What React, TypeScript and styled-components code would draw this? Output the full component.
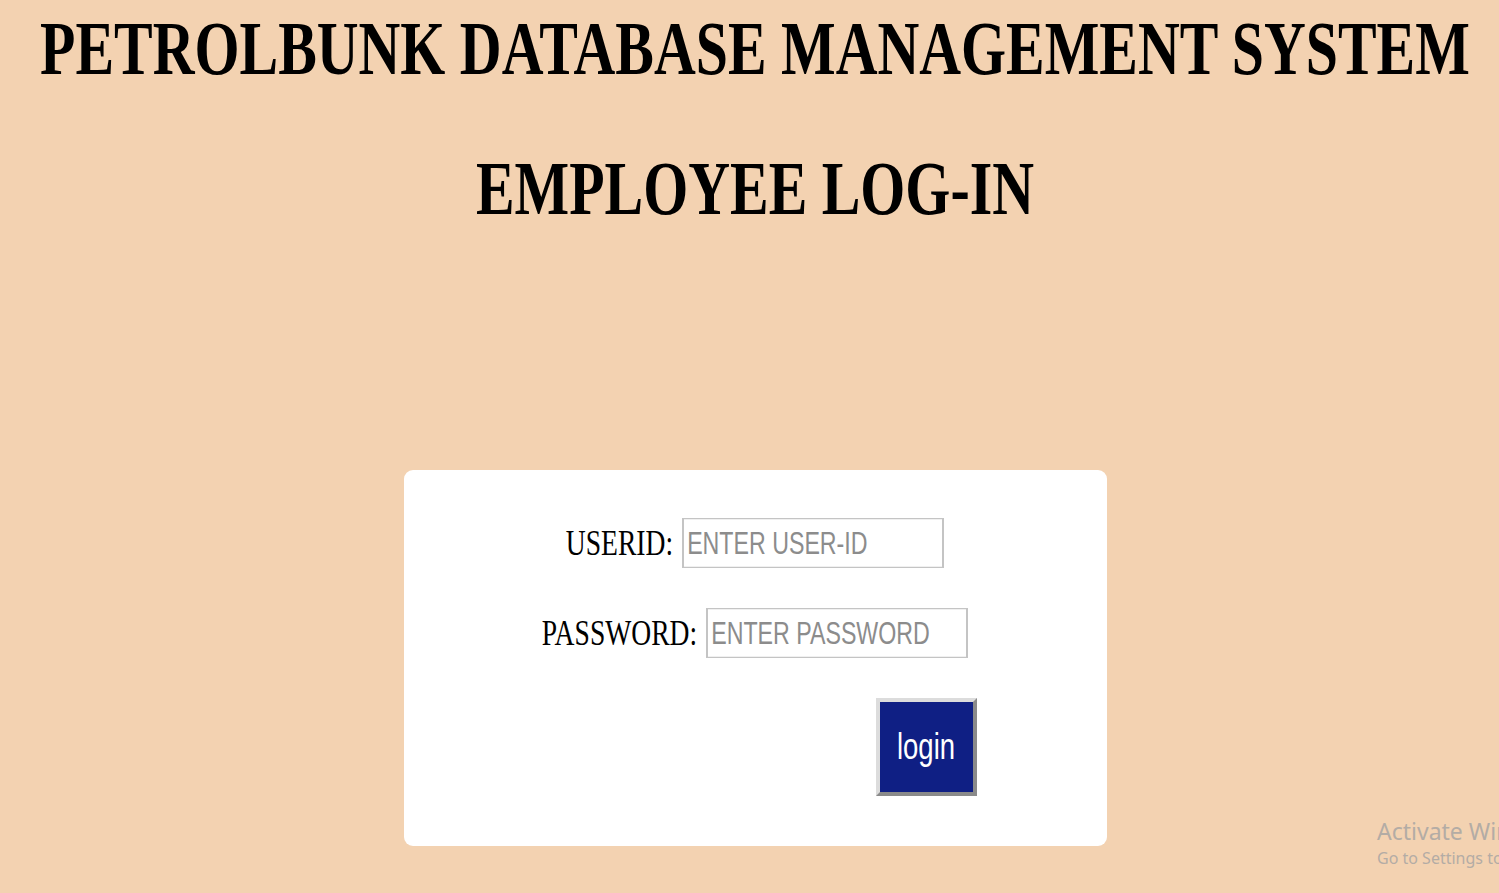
import React from "react";
import styled, { createGlobalStyle } from "styled-components";

const GlobalStyle = createGlobalStyle`
  html, body {
    margin: 0;
    padding: 0;
    background: #f3d2b1;
    overflow: hidden;
  }
  body {
    font-family: "Liberation Serif", "Times New Roman", serif;
    width: 1499px;
    height: 893px;
  }
`;

const Page = styled.div`
  position: relative;
  width: 1499px;
  height: 893px;
  box-sizing: border-box;
  padding: 20px 0 0 11px;
  display: flex;
  flex-direction: column;
  align-items: center;
`;

const Heading = styled.h1<{ $gap?: number }>`
  margin: ${(p) => p.$gap ?? 0}px 0 0;
  font-family: "Liberation Serif", "Times New Roman", serif;
  font-weight: 700;
  font-size: 57.9px;
  line-height: 57.5px;
  color: #000;
  white-space: nowrap;
  transform: scaleY(1.31);
`;

const Card = styled.form`
  margin-top: 253px;
  width: 703px;
  box-sizing: border-box;
  background: #fff;
  border-radius: 9px;
  padding: 54px 0 50px;
  display: flex;
  flex-direction: column;
`;

const Row = styled.div<{ $gap?: number }>`
  display: flex;
  justify-content: center;
  align-items: center;
  gap: 9px;
  height: 38px;
  margin-top: ${(p) => p.$gap ?? 0}px;
`;

const Label = styled.label`
  font-family: "Liberation Serif", "Times New Roman", serif;
  font-size: 27.6px;
  line-height: 36px;
  color: #000;
  white-space: nowrap;
  transform: scaleY(1.3);
`;

const Input = styled.input`
  width: 262px;
  height: 38px;
  box-sizing: border-box;
  border: 2px solid #c4c4c4;
  border-top-width: 1.6px;
  border-bottom-width: 1.6px;
  padding: 0 3px;
  margin: 0;
  background: #fff;
  font-family: "Liberation Sans", Arial, sans-serif;
  font-size: 23.2px;
  color: #333;
  outline: none;
  transform: scaleY(1.32);
  &::placeholder {
    color: #8c8c8c;
  }
`;

const ButtonRow = styled.div`
  display: flex;
  margin-top: 46px;
  padding-left: 472px;
`;

const LoginButton = styled.button`
  width: 101px;
  height: 98px;
  box-sizing: border-box;
  margin: 0;
  padding: 0;
  background: #0f1f84;
  border-style: solid;
  border-width: 4px;
  border-color: #dcdcdc #8a8a8a #8a8a8a #dcdcdc;
  display: flex;
  align-items: center;
  justify-content: center;
  cursor: pointer;
`;

const ButtonText = styled.span`
  display: inline-block;
  font-family: "Liberation Sans", Arial, sans-serif;
  font-size: 27.5px;
  line-height: 30px;
  color: #fff;
  transform: scaleY(1.34);
`;

const Watermark = styled.div`
  position: absolute;
  left: 1377px;
  top: 815px;
  color: #b3aca5;
  font-family: "Noto Sans", "Open Sans", sans-serif;
  white-space: nowrap;
  pointer-events: none;
`;

const WatermarkTitle = styled.div`
  font-size: 23px;
  line-height: 32px;
`;

const WatermarkSub = styled.div`
  font-size: 16px;
  line-height: 22px;
`;

export default function App() {
  return (
    <>
      <GlobalStyle />
      <Page>
        <Heading>PETROLBUNK DATABASE MANAGEMENT SYSTEM</Heading>
        <Heading $gap={82}>EMPLOYEE LOG-IN</Heading>
        <Card onSubmit={(e) => e.preventDefault()}>
          <Row>
            <Label htmlFor="userid">USERID:</Label>
            <Input id="userid" type="text" placeholder="ENTER USER-ID" />
          </Row>
          <Row $gap={51.5}>
            <Label htmlFor="password">PASSWORD:</Label>
            <Input id="password" type="password" placeholder="ENTER PASSWORD" />
          </Row>
          <ButtonRow>
            <LoginButton type="submit">
              <ButtonText>login</ButtonText>
            </LoginButton>
          </ButtonRow>
        </Card>
        <Watermark>
          <WatermarkTitle>Activate Windows</WatermarkTitle>
          <WatermarkSub>Go to Settings to activate Windows.</WatermarkSub>
        </Watermark>
      </Page>
    </>
  );
}
